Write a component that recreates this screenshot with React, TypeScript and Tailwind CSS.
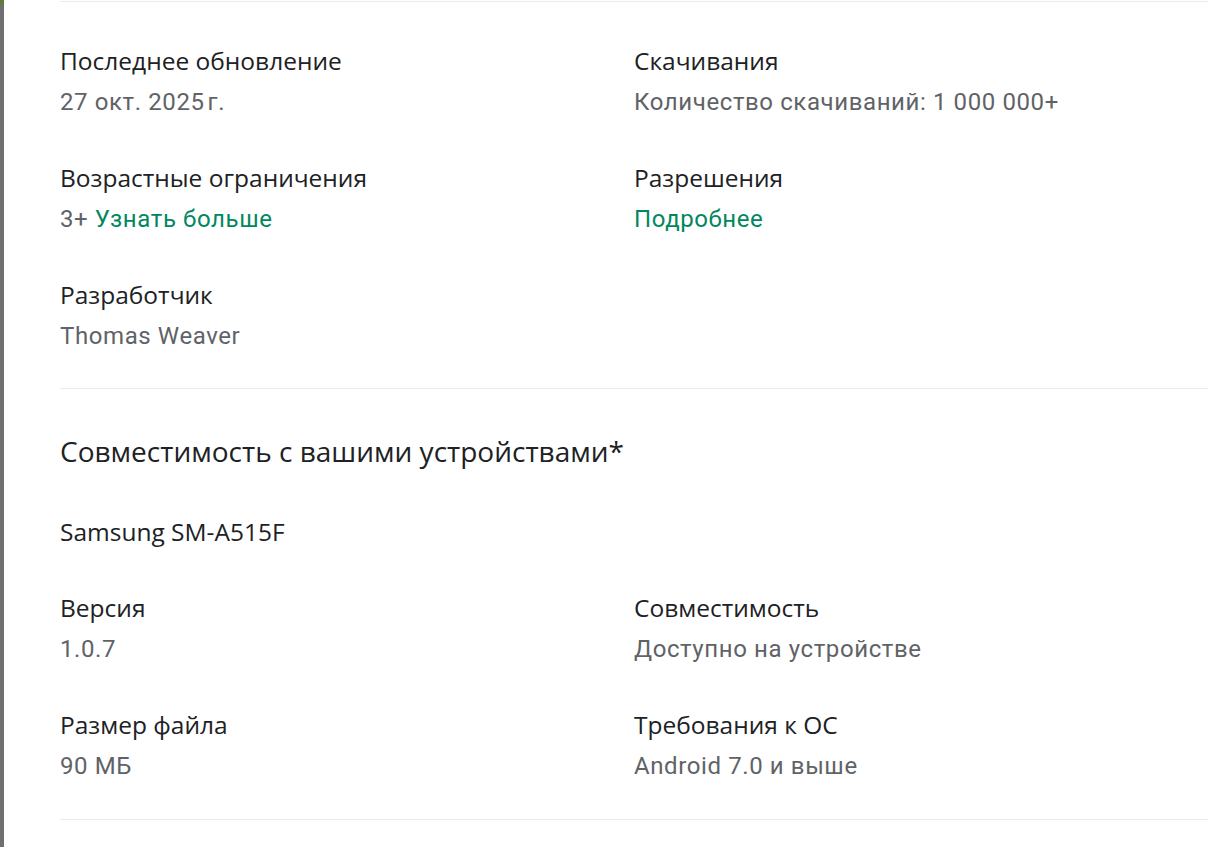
import React from "react";

const titleCls = "text-[24.5px] leading-[30px] font-medium text-[#202124]";
const valueCls = "mt-[11px] text-[24px] leading-[30px] tracking-[0.6px] text-[#5f6368]";

function Item({ title, children }: { title: string; children: React.ReactNode }) {
  return (
    <div>
      <div className={titleCls} style={{ fontFamily: "'Open Sans', Roboto, sans-serif" }}>{title}</div>
      <div className={valueCls} style={{ fontFamily: "Roboto, sans-serif" }}>{children}</div>
    </div>
  );
}

export default function App() {
  return (
    <div className="flex w-[1210px] h-[847px] overflow-hidden bg-white" style={{ fontFamily: "Roboto, sans-serif" }}>
      <div className="w-[4px] shrink-0 flex flex-col bg-[#6f6f6f]">
        <div className="h-[5px] bg-[#5f7a3a]" />
      </div>
      <div className="flex-1 pl-[56px] pr-[2px]">
        <div className="border-t border-[#e8eaed] mt-px" />
        <div className="grid grid-cols-2 gap-y-[46px] pt-[44px]">
          <Item title="Последнее обновление">{"27 окт. 2025\u202Fг."}</Item>
          <Item title="Скачивания">Количество скачиваний: 1 000 000+</Item>
          <Item title="Возрастные ограничения">
            3+ <span className="text-[#01875f]">Узнать больше</span>
          </Item>
          <Item title="Разрешения">
            <span className="text-[#01875f]">Подробнее</span>
          </Item>
          <Item title="Разработчик">Thomas Weaver</Item>
        </div>
        <div className="border-t border-[#e8eaed] mt-[37px]" />
        <div
          className="mt-[44px] text-[28px] leading-[36px] text-[#202124]"
          style={{ fontFamily: "'Open Sans', Roboto, sans-serif" }}
        >
          Совместимость с вашими устройствами*
        </div>
        <div
          className="mt-[48px] text-[24.5px] leading-[30px] font-medium text-[#202124]"
          style={{ fontFamily: "'Open Sans', Roboto, sans-serif" }}
        >
          Samsung SM-A515F
        </div>
        <div className="grid grid-cols-2 gap-y-[46px] pt-[46px]">
          <Item title="Версия">1.0.7</Item>
          <Item title="Совместимость">Доступно на устройстве</Item>
          <Item title="Размер файла">90 МБ</Item>
          <Item title="Требования к ОС">Android 7.0 и выше</Item>
        </div>
        <div className="border-t border-[#e8eaed] mt-[38px]" />
      </div>
    </div>
  );
}
